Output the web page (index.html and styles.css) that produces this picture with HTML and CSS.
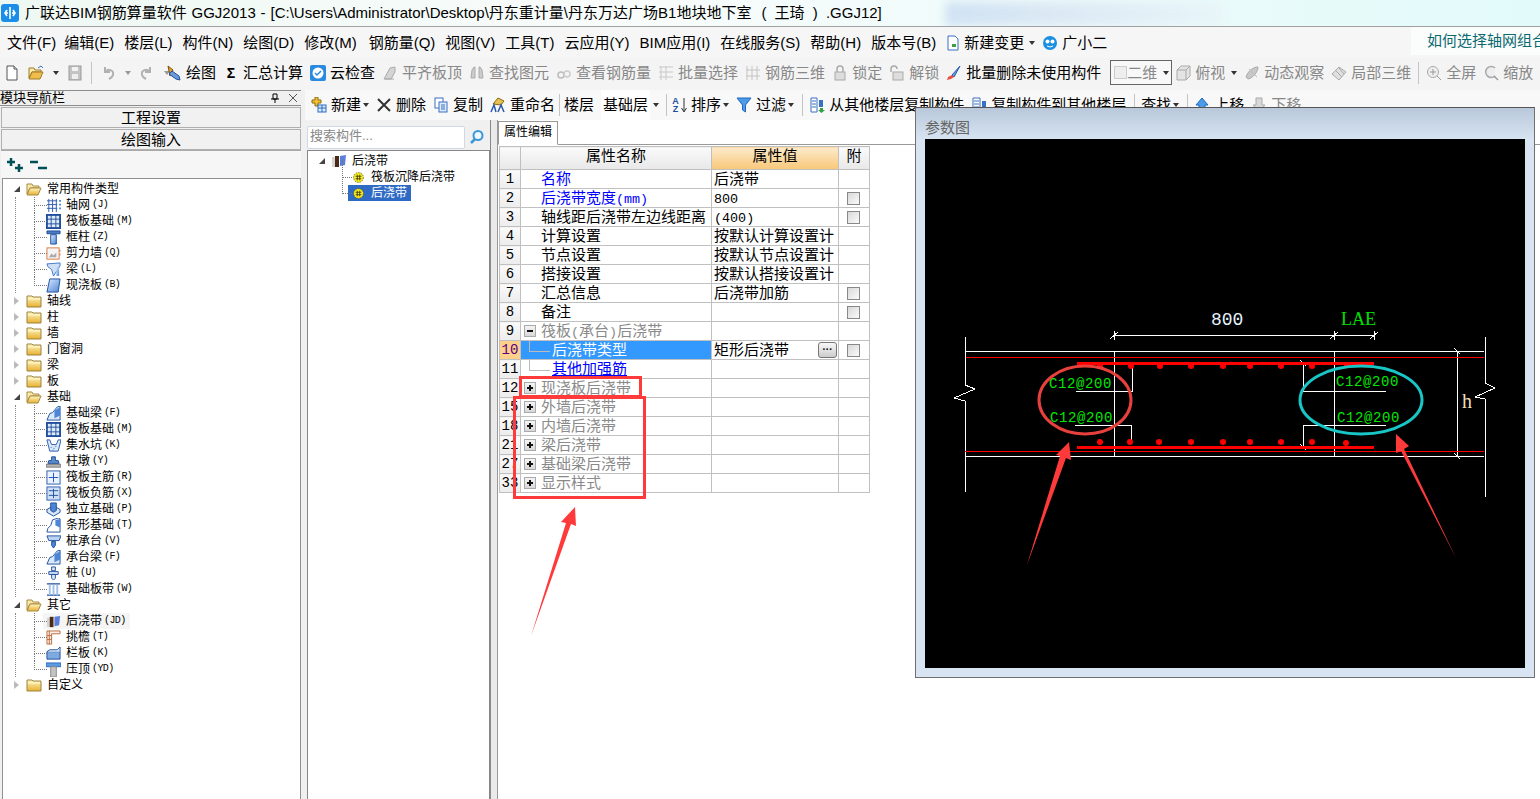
FILE: index.html
```html
<!DOCTYPE html>
<html lang="zh-CN">
<head>
<meta charset="utf-8">
<title>广联达BIM钢筋算量软件 GGJ2013</title>
<link rel="stylesheet" href="styles.css">
</head>
<body>
<svg class="sprite" width="0" height="0" aria-hidden="true">
<defs>
<linearGradient id="gf" x1="0" y1="0" x2="0" y2="1"><stop offset="0" stop-color="#fff6c0"/><stop offset="1" stop-color="#e8b030"/></linearGradient>
<linearGradient id="gb" x1="0" y1="0" x2="1" y2="1"><stop offset="0" stop-color="#dcebff"/><stop offset="1" stop-color="#4d86d8"/></linearGradient>
<symbol id="f-open" viewBox="0 0 16 16"><path d="M1 3h5l1 2h6v2H4L1 13z" fill="#fbe9a8" stroke="#a88b45"/><path d="M1 14l3-7h11l-3 7z" fill="url(#gf)" stroke="#a88b45"/></symbol>
<symbol id="f-closed" viewBox="0 0 16 16"><path d="M1 4V3h5l1 1h8v10H1z" fill="url(#gf)" stroke="#9a8440"/><path d="M2 6h12" stroke="#fff8d8"/></symbol>
<symbol id="i-grid" viewBox="0 0 16 16"><path d="M1 3h11M1 7h11M1 11h11M3 1v14M7 1v14M11 1v14" stroke="#2a5ab0" fill="none"/><path d="M14 2h2v2h-2zM14 6h2v2h-2zM14 10h2v2h-2z" fill="#4c86d4"/></symbol>
<symbol id="i-raft" viewBox="0 0 16 16"><rect x="1" y="1" width="14" height="14" fill="#dfeaf8" stroke="#1f4f9c" stroke-width="2"/><path d="M5.500 1v14M10.500 1v14M1 5.500h14M1 10.500h14" stroke="#1f4f9c"/></symbol>
<symbol id="i-col" viewBox="0 0 16 16"><path d="M1 1h14v3H1z" fill="#4a7cc4" stroke="#1f4f9c"/><path d="M5 5h6v10H5z" fill="url(#gb)" stroke="#1f4f9c"/></symbol>
<symbol id="i-wall" viewBox="0 0 16 16"><rect x="1" y="2" width="13" height="12" fill="#f4f4f4" stroke="#d87a40"/><path d="M3 12l3-4 2 2 3-3v5z" fill="#aaa"/><path d="M15 4v2M15 8v2" stroke="#d87a40"/></symbol>
<symbol id="i-beam" viewBox="0 0 16 16"><path d="M1 2l14-1v3L8 15 6 8 2 5z" fill="#cfe0f6" stroke="#3c78c8"/><path d="M11 4l3 1v10h-3z" fill="url(#gb)"/></symbol>
<symbol id="i-slab" viewBox="0 0 16 16"><path d="M4 1h11l-2 14H1z" fill="url(#gb)" stroke="#1f4f9c"/></symbol>
<symbol id="i-fbeam" viewBox="0 0 16 16"><path d="M1 15l3-7 3-1 5-6 3-1v15H1z" fill="#dbe8f8" stroke="#1f4f9c"/><path d="M9 5l6-4v9l-6 3z" fill="#4d86d8"/></symbol>
<symbol id="i-pit" viewBox="0 0 16 16"><path d="M1 2h3l2 5h5l2-5h3l-3 12H4z" fill="#dce9f8" stroke="#2a5ab0"/><path d="M5 10h1M8 11h1M10 9h1M7 13h1" stroke="#2a5ab0"/></symbol>
<symbol id="i-pier" viewBox="0 0 16 16"><path d="M6 3h4v4h3l1 3H2l1-3h3z" fill="#5b8ccc" stroke="#1f4f9c"/><rect x="0" y="11" width="16" height="3" fill="#b8b8b8" stroke="#777"/></symbol>
<symbol id="i-rb1" viewBox="0 0 16 16"><rect x="1" y="1" width="14" height="14" fill="#eaf2fc" stroke="#2a5ab0"/><path d="M8 3v10M3 8h10" stroke="#1a50c0"/></symbol>
<symbol id="i-rb2" viewBox="0 0 16 16"><rect x="1" y="1" width="14" height="14" fill="#cfe0f6" stroke="#2a5ab0"/><path d="M3 5h10M3 10h10M8 3v10" stroke="#1f4f9c"/></symbol>
<symbol id="i-iso" viewBox="0 0 16 16"><path d="M1 8l7-4 7 4v3l-7 4-7-4z" fill="#dbe8f8" stroke="#1f4f9c"/><path d="M5 1h6v8l-3 2-3-2z" fill="#4d86d8" stroke="#1f4f9c"/></symbol>
<symbol id="i-strip" viewBox="0 0 16 16"><path d="M1 15l1-4 3-3 2-6 6-2 2 1v14z" fill="#fff" stroke="#1f4f9c"/><path d="M10 2l5-1v9l-5-2z" fill="#4d86d8"/></symbol>
<symbol id="i-cap" viewBox="0 0 16 16"><path d="M1 2h15l-2 5H3z" fill="#bcd4f2" stroke="#1f4f9c"/><path d="M6 8h4v4l-2 3-2-3z" fill="#4d86d8" stroke="#1f4f9c"/></symbol>
<symbol id="i-pile" viewBox="0 0 16 16"><path d="M6 1h4v4h-4zM3 6h10v3H3zM6 9h4v4l-2 2-2-2z" fill="#dbe8f8" stroke="#1f4f9c"/></symbol>
<symbol id="i-band" viewBox="0 0 16 16"><path d="M1 2h14M1 14h14" stroke="#1f4f9c" stroke-width="1.500"/><path d="M3 3h2v11H3zM7 3h2v11H7zM11 3h2v11h-2z" fill="#9fc0ea"/></symbol>
<symbol id="i-pour" viewBox="0 0 16 16"><path d="M1 4h6v10H1z" fill="#d8d4d0"/><path d="M4 3h4v11H4z" fill="#4a2a18"/><path d="M9 3l6-1-1 10-5 1z" fill="#5b7fd8"/></symbol>
<symbol id="i-eave" viewBox="0 0 16 16"><path d="M1 1h14v3H6v11H1z" fill="#fbeee4" stroke="#b86a3c"/><path d="M1 6h5M1 10h5M3.500 1v14" stroke="#b86a3c"/></symbol>
<symbol id="i-rail" viewBox="0 0 16 16"><path d="M1 6h14v8H1z" fill="#7eaae0" stroke="#1f4f9c"/><path d="M1 6l3-2h8l3-3v5" fill="#dbe8f8" stroke="#1f4f9c"/></symbol>
<symbol id="i-top" viewBox="0 0 16 16"><path d="M0 1h16v4H0z" fill="#5b9be0" stroke="#2a6ac0"/><path d="M5 5h6v11H5z" fill="#c4c4c4" stroke="#888"/></symbol>
<symbol id="i-gear" viewBox="0 0 16 16"><circle cx="8" cy="8" r="6" fill="#f8f020" stroke="#6a5a10" stroke-dasharray="2 1"/><path d="M4.500 6.500h7M4.500 9.500h7M6.500 4.500v7M9.500 4.500v7" stroke="#3a3410"/></symbol>
<symbol id="t-new" viewBox="0 0 16 16"><path d="M3 1h7l3 3v11H3z" fill="#fff" stroke="#555"/><path d="M10 1v3h3" fill="#ddd" stroke="#555"/></symbol>
<symbol id="t-open" viewBox="0 0 16 16"><path d="M1 3h5l1 2h6v2H4L1 13z" fill="#fbe9a8" stroke="#a07a25"/><path d="M1 14l3-7h11l-3 7z" fill="#f0bc4c" stroke="#a07a25"/><path d="M10 3l3-2 2 2" fill="none" stroke="#3a70c0"/></symbol>
<symbol id="t-save" viewBox="0 0 16 16"><rect x="2" y="1" width="12" height="14" fill="#c4c4c4" stroke="#999"/><rect x="5" y="2" width="6" height="4" fill="#f2f2f2"/><rect x="5" y="9" width="6" height="5" fill="#eee"/></symbol>
<symbol id="t-undo" viewBox="0 0 16 16"><path d="M5 2v5h5M5 7c3-4 9-2 8 3-.5 2-2 3-4 4" fill="none" stroke="#b0b0b0" stroke-width="2"/></symbol>
<symbol id="t-redo" viewBox="0 0 16 16"><path d="M11 2v5H6M11 7c-3-4-9-2-8 3 .5 2 2 3 4 4" fill="none" stroke="#b0b0b0" stroke-width="2"/></symbol>
<symbol id="t-draw" viewBox="0 0 16 16"><path d="M2 1l5 4-3 6z" fill="#e8a030" stroke="#7a5010"/><path d="M6 6l7 5 1 4-4-1-7-5z" fill="#6a9ad8" stroke="#1f4f9c"/></symbol>
<symbol id="t-cloud" viewBox="0 0 16 16"><rect x="0" y="0" width="16" height="16" rx="2" fill="#2a8ae0"/><circle cx="8" cy="8" r="5.500" fill="#fff"/><path d="M5 8l2 2 4-4" fill="none" stroke="#2a8ae0" stroke-width="1.500"/></symbol>
<symbol id="t-gray" viewBox="0 0 16 16"><path d="M2 14L8 3l5-1v5l-4 7z" fill="#d4d4d4" stroke="#aaa"/><path d="M3 14h9" stroke="#aaa"/></symbol>
<symbol id="t-binoc" viewBox="0 0 16 16"><path d="M2 13l1-8 2-3h1v11zM14 13l-1-8-2-3h-1v11z" fill="#ccc" stroke="#aaa"/></symbol>
<symbol id="t-link" viewBox="0 0 16 16"><circle cx="5" cy="10" r="3" fill="none" stroke="#bbb" stroke-width="1.500"/><circle cx="11" cy="9" r="3" fill="none" stroke="#ccc" stroke-width="1.500"/></symbol>
<symbol id="t-sel" viewBox="0 0 16 16"><path d="M1 2h14M1 7h14M1 12h14M3 1v14M8 1v14" stroke="#c8c8c8"/></symbol>
<symbol id="t-3d" viewBox="0 0 16 16"><path d="M2 1v14M7 1v14M12 1v14M1 5h14M1 11h14" stroke="#c4c4c4"/></symbol>
<symbol id="t-lock" viewBox="0 0 16 16"><path d="M5 7V4a3 3 0 016 0v3" fill="none" stroke="#aaa" stroke-width="1.500"/><rect x="3" y="7" width="10" height="8" fill="#ddd" stroke="#aaa"/></symbol>
<symbol id="t-unlock" viewBox="0 0 16 16"><path d="M2 7V4a3 3 0 016 0" fill="none" stroke="#aaa" stroke-width="1.500"/><rect x="4" y="7" width="10" height="8" fill="#ddd" stroke="#aaa"/></symbol>
<symbol id="t-brush" viewBox="0 0 16 16"><path d="M14 1L6 10l2 2z" fill="#6a9ad8" stroke="#2a5ab0"/><path d="M6 10l-4 2-1 3 4-1 3-2z" fill="#e85040"/></symbol>
<symbol id="t-box" viewBox="0 0 16 16"><path d="M2 5l4-4h9v10l-4 4H2z" fill="#e4e4e4" stroke="#aaa"/><path d="M2 5h9v10M11 5l4-4" fill="none" stroke="#aaa"/></symbol>
<symbol id="t-orbit" viewBox="0 0 16 16"><path d="M2 12C4 6 9 2 14 2c0 5-5 11-10 12z" fill="#c8c8c8" stroke="#aaa"/><path d="M5 4l8 8" stroke="#bbb"/></symbol>
<symbol id="t-local" viewBox="0 0 16 16"><path d="M1 9l7-7 7 5-7 8z" fill="#e0e0e0" stroke="#aaa"/><path d="M5 6l6 6M8 3l5 6" stroke="#aaa"/></symbol>
<symbol id="t-full" viewBox="0 0 16 16"><circle cx="7" cy="7" r="5.500" fill="#eee" stroke="#aaa"/><path d="M4 7h6M7 4v6M11 11l4 4" stroke="#999"/></symbol>
<symbol id="t-zoom" viewBox="0 0 16 16"><path d="M12 3a5.500 5.500 0 100 8" fill="#eee" stroke="#aaa" stroke-width="1.500"/><path d="M11 11l4 4" stroke="#999" stroke-width="1.500"/></symbol>
<symbol id="b-new" viewBox="0 0 16 16"><path d="M4 0h3v3h3v3H7v3H4V6H1V3h3z" fill="#f2c030" stroke="#8a6a10"/><rect x="7" y="8" width="8" height="7" fill="#dcecfc" stroke="#2a6ac0"/><path d="M7 11h8M11 8v7" stroke="#2a6ac0"/></symbol>
<symbol id="b-copy" viewBox="0 0 16 16"><rect x="2" y="1" width="8" height="10" fill="#fff" stroke="#3a70c0"/><rect x="6" y="5" width="8" height="10" fill="#dcecfc" stroke="#3a70c0"/><path d="M8 8h4M8 10h4M8 12h4" stroke="#3a70c0"/></symbol>
<symbol id="b-ren" viewBox="0 0 16 16"><path d="M3 7l5-6 6 3-3 4z" fill="#e8c050" stroke="#8a6a10"/><path d="M1 15l3-7 2 7M8 15l3-7 3 7" fill="none" stroke="#2a5ab0" stroke-width="1.500"/></symbol>
<symbol id="b-filter" viewBox="0 0 16 16"><path d="M1 1h14L9.500 8v7l-3-2V8z" fill="#4d9ae8" stroke="#1f6ac0"/></symbol>
<symbol id="b-floor" viewBox="0 0 16 16"><path d="M2 1h6v14H2z" fill="#fff" stroke="#3a70c0"/><path d="M3 4h4M3 7h4M3 10h4" stroke="#3a70c0"/><path d="M10 3h4v7h-4z" fill="#3a70c0"/><path d="M11 11h3v2h2l-3.500 3L9 13h2z" fill="#30a040"/></symbol>
<symbol id="b-floor2" viewBox="0 0 16 16"><path d="M2 1h7v14H2z" fill="#fff" stroke="#3a70c0"/><path d="M3 4h5M3 7h5M3 10h5" stroke="#3a70c0"/><path d="M11 4h4v11h-4z" fill="#3a70c0"/></symbol>
<symbol id="b-up" viewBox="0 0 16 16"><path d="M8 1l6 7h-3v7H5V8H2z" fill="#4d9ae8" stroke="#1f6ac0"/></symbol>
<symbol id="b-down" viewBox="0 0 16 16"><path d="M8 15l6-7h-3V1H5v7H2z" fill="#d8d8d8" stroke="#aaa"/></symbol>
<symbol id="b-search" viewBox="0 0 16 16"><circle cx="9" cy="6.500" r="4.500" fill="#f0f8ff" stroke="#3a98d8" stroke-width="2"/><path d="M6 10l-4 4" stroke="#3a98d8" stroke-width="2.500"/></symbol>
</defs>
</svg>

<header class="titlebar">
<svg class="logo" viewBox="0 0 18 18"><rect width="18" height="18" rx="3" fill="#1a8ee8"/><path d="M9 3v12M4 9h3M11 9h3M6 6l-2 3 2 3M12 6l2 3-2 3" fill="none" stroke="#fff" stroke-width="1.600"/></svg>
<span class="title-text">广联达BIM钢筋算量软件 GGJ2013 - [C:\Users\Administrator\Desktop\丹东重计量\丹东万达广场B1地块地下室<span class="title-tail">( 王琦 ) .GGJ12]</span></span>
<div class="title-blur"></div>
</header>

<nav class="menubar">
<span class="menu">文件(F)</span><span class="menu">编辑(E)</span><span class="menu">楼层(L)</span><span class="menu">构件(N)</span><span class="menu">绘图(D)</span><span class="menu">修改(M)</span><span class="menu">钢筋量(Q)</span><span class="menu">视图(V)</span><span class="menu">工具(T)</span><span class="menu">云应用(Y)</span><span class="menu">BIM应用(I)</span><span class="menu">在线服务(S)</span><span class="menu">帮助(H)</span><span class="menu">版本号(B)</span>
<span class="menu-ico"><svg class="ico" viewBox="0 0 16 16"><path d="M3 1h7l3 3v11H3z" fill="#fff" stroke="#3a70c0"/><path d="M7 9h4v3H7z" fill="#40a040"/></svg>新建变更<i class="caret"></i></span>
<span class="menu-ico"><svg class="ico" viewBox="0 0 16 16"><ellipse cx="8" cy="8" rx="7" ry="7" fill="#1a90e0"/><circle cx="5.500" cy="6.500" r="2" fill="#fff"/><circle cx="10.500" cy="6.500" r="2" fill="#fff"/><path d="M5 11q3 2 6 0" stroke="#fff" fill="none"/></svg>广小二</span>
<div class="menu-tip">如何选择轴网组合</div>
</nav>

<div class="toolbar">
<div class="tgroup">
<span class="ti"><svg class="ico"><use href="#t-new"/></svg></span>
<span class="ti"><svg class="ico"><use href="#t-open"/></svg><i class="caret"></i></span>
<span class="ti"><svg class="ico"><use href="#t-save"/></svg></span>
<i class="sep"></i>
<span class="ti"><svg class="ico"><use href="#t-undo"/></svg><i class="caret dim"></i></span>
<span class="ti"><svg class="ico"><use href="#t-redo"/></svg><i class="caret dim"></i></span>
</div>
<span class="ti"><svg class="ico"><use href="#t-draw"/></svg>绘图</span>
<span class="ti"><b class="sigma">Σ</b>汇总计算</span>
<span class="ti"><svg class="ico"><use href="#t-cloud"/></svg>云检查</span>
<span class="ti off"><svg class="ico"><use href="#t-gray"/></svg>平齐板顶</span>
<span class="ti off"><svg class="ico"><use href="#t-binoc"/></svg>查找图元</span>
<span class="ti off"><svg class="ico"><use href="#t-link"/></svg>查看钢筋量</span>
<span class="ti off"><svg class="ico"><use href="#t-sel"/></svg>批量选择</span>
<span class="ti off"><svg class="ico"><use href="#t-3d"/></svg>钢筋三维</span>
<span class="ti off"><svg class="ico"><use href="#t-lock"/></svg>锁定</span>
<span class="ti off"><svg class="ico"><use href="#t-unlock"/></svg>解锁</span>
<span class="ti"><svg class="ico"><use href="#t-brush"/></svg>批量删除未使用构件</span>
<span class="combo"><i class="combo-box"></i>二维<i class="caret"></i></span>
<span class="ti off"><svg class="ico"><use href="#t-box"/></svg>俯视<i class="caret"></i></span>
<span class="ti off"><svg class="ico"><use href="#t-orbit"/></svg>动态观察</span>
<span class="ti off"><svg class="ico"><use href="#t-local"/></svg>局部三维</span>
<i class="sep"></i>
<span class="ti off"><svg class="ico"><use href="#t-full"/></svg>全屏</span>
<span class="ti off"><svg class="ico"><use href="#t-zoom"/></svg>缩放</span>
</div>

<main class="main">
<aside class="nav">
<div class="nav-head"><span>模块导航栏</span><span class="nav-pins"><svg class="pin" viewBox="0 0 10 10"><path d="M3 1h4v5H3zM1 6h8M5 6v4" fill="none" stroke="#000"/></svg><svg class="pin" viewBox="0 0 10 10"><path d="M1 1l8 8M9 1l-8 8" stroke="#555"/></svg></span></div>
<div class="nav-btn">工程设置</div>
<div class="nav-btn">绘图输入</div>
<div class="nav-tools">
<svg class="big" viewBox="0 0 18 16"><path d="M4 1v8M0 5h8M12 7v8M8 11h8" stroke="#00505a" stroke-width="2.500"/></svg>
<svg class="big" viewBox="0 0 18 16"><path d="M0 5h8M8 11h9" stroke="#00505a" stroke-width="2.500"/></svg>
</div>
<div class="tree">
<div class="node open"><i class="exp"></i><svg class="ico"><use href="#f-open"/></svg><span>常用构件类型</span></div>
<div class="kids">
<div class="leaf"><svg class="ico"><use href="#i-grid"/></svg>轴网<small>(J)</small></div>
<div class="leaf"><svg class="ico"><use href="#i-raft"/></svg>筏板基础<small>(M)</small></div>
<div class="leaf"><svg class="ico"><use href="#i-col"/></svg>框柱<small>(Z)</small></div>
<div class="leaf"><svg class="ico"><use href="#i-wall"/></svg>剪力墙<small>(Q)</small></div>
<div class="leaf"><svg class="ico"><use href="#i-beam"/></svg>梁<small>(L)</small></div>
<div class="leaf"><svg class="ico"><use href="#i-slab"/></svg>现浇板<small>(B)</small></div>
</div>
<div class="node"><i class="exp"></i><svg class="ico"><use href="#f-closed"/></svg><span>轴线</span></div>
<div class="node"><i class="exp"></i><svg class="ico"><use href="#f-closed"/></svg><span>柱</span></div>
<div class="node"><i class="exp"></i><svg class="ico"><use href="#f-closed"/></svg><span>墙</span></div>
<div class="node"><i class="exp"></i><svg class="ico"><use href="#f-closed"/></svg><span>门窗洞</span></div>
<div class="node"><i class="exp"></i><svg class="ico"><use href="#f-closed"/></svg><span>梁</span></div>
<div class="node"><i class="exp"></i><svg class="ico"><use href="#f-closed"/></svg><span>板</span></div>
<div class="node open"><i class="exp"></i><svg class="ico"><use href="#f-open"/></svg><span>基础</span></div>
<div class="kids">
<div class="leaf"><svg class="ico"><use href="#i-fbeam"/></svg>基础梁<small>(F)</small></div>
<div class="leaf"><svg class="ico"><use href="#i-raft"/></svg>筏板基础<small>(M)</small></div>
<div class="leaf"><svg class="ico"><use href="#i-pit"/></svg>集水坑<small>(K)</small></div>
<div class="leaf"><svg class="ico"><use href="#i-pier"/></svg>柱墩<small>(Y)</small></div>
<div class="leaf"><svg class="ico"><use href="#i-rb1"/></svg>筏板主筋<small>(R)</small></div>
<div class="leaf"><svg class="ico"><use href="#i-rb2"/></svg>筏板负筋<small>(X)</small></div>
<div class="leaf"><svg class="ico"><use href="#i-iso"/></svg>独立基础<small>(P)</small></div>
<div class="leaf"><svg class="ico"><use href="#i-strip"/></svg>条形基础<small>(T)</small></div>
<div class="leaf"><svg class="ico"><use href="#i-cap"/></svg>桩承台<small>(V)</small></div>
<div class="leaf"><svg class="ico"><use href="#i-fbeam"/></svg>承台梁<small>(F)</small></div>
<div class="leaf"><svg class="ico"><use href="#i-pile"/></svg>桩<small>(U)</small></div>
<div class="leaf"><svg class="ico"><use href="#i-band"/></svg>基础板带<small>(W)</small></div>
</div>
<div class="node open"><i class="exp"></i><svg class="ico"><use href="#f-open"/></svg><span>其它</span></div>
<div class="kids">
<div class="leaf current"><svg class="ico"><use href="#i-pour"/></svg>后浇带<small>(JD)</small></div>
<div class="leaf"><svg class="ico"><use href="#i-eave"/></svg>挑檐<small>(T)</small></div>
<div class="leaf"><svg class="ico"><use href="#i-rail"/></svg>栏板<small>(K)</small></div>
<div class="leaf"><svg class="ico"><use href="#i-top"/></svg>压顶<small>(YD)</small></div>
</div>
<div class="node"><i class="exp"></i><svg class="ico"><use href="#f-closed"/></svg><span>自定义</span></div>
</div>
</aside>

<section class="work">
<div class="subbar">
<span class="ti"><svg class="ico"><use href="#b-new"/></svg>新建<i class="caret"></i></span>
<span class="ti"><svg class="ico" viewBox="0 0 16 16"><path d="M2 2l12 12M14 2L2 14" stroke="#333" stroke-width="2"/></svg>删除</span>
<span class="ti"><svg class="ico"><use href="#b-copy"/></svg>复制</span>
<span class="ti"><svg class="ico"><use href="#b-ren"/></svg>重命名</span>
<i class="sep"></i>
<span class="ti">楼层</span>
<span class="floor">基础层</span><i class="caret floor-caret"></i>
<i class="sep"></i>
<span class="ti"><span class="az">A<br>Z</span><svg class="arrow" viewBox="0 0 6 16"><path d="M3 1v13M.5 11L3 15l2.500-4" fill="none" stroke="#333"/></svg>排序<i class="caret"></i></span>
<span class="ti"><svg class="ico"><use href="#b-filter"/></svg>过滤<i class="caret"></i></span>
<i class="sep wide"></i>
<span class="ti"><svg class="ico"><use href="#b-floor"/></svg>从其他楼层复制构件</span>
<span class="ti"><svg class="ico"><use href="#b-floor2"/></svg>复制构件到其他楼层</span>
<i class="sep wide"></i>
<span class="ti">查找<i class="caret"></i></span>
<i class="sep wide"></i>
<span class="ti"><svg class="ico"><use href="#b-up"/></svg>上移</span>
<span class="ti off"><svg class="ico"><use href="#b-down"/></svg>下移</span>
</div>
<div class="panes">
<div class="list">
<div class="search"><div class="search-box">搜索构件...</div><svg class="ico"><use href="#b-search"/></svg></div>
<div class="list-tree">
<div class="lnode"><i class="exp open-exp"></i><svg class="ico"><use href="#i-pour"/></svg><span>后浇带</span></div>
<div class="lkids">
<div class="lleaf"><svg class="gear"><use href="#i-gear"/></svg><span>筏板沉降后浇带</span></div>
<div class="lleaf sel"><svg class="gear"><use href="#i-gear"/></svg><span>后浇带</span></div>
</div>
</div>
</div>
<div class="props">
<div class="tabs"><span class="tab">属性编辑</span></div>
<table class="grid">
<colgroup><col class="c-n"><col class="c-name"><col class="c-val"><col class="c-att"></colgroup>
<thead><tr><th></th><th>属性名称</th><th class="hot">属性值</th><th>附</th></tr></thead>
<tbody>
<tr><td class="n">1</td><td class="link">名称</td><td>后浇带</td><td></td></tr>
<tr><td class="n">2</td><td class="link">后浇带宽度<span class="mono">(mm)</span></td><td><span class="mono">800</span></td><td class="cb"><i></i></td></tr>
<tr><td class="n">3</td><td>轴线距后浇带左边线距离</td><td><span class="mono">(400)</span></td><td class="cb"><i></i></td></tr>
<tr><td class="n">4</td><td>计算设置</td><td>按默认计算设置计</td><td></td></tr>
<tr><td class="n">5</td><td>节点设置</td><td>按默认节点设置计</td><td></td></tr>
<tr><td class="n">6</td><td>搭接设置</td><td>按默认搭接设置计</td><td></td></tr>
<tr><td class="n">7</td><td>汇总信息</td><td>后浇带加筋</td><td class="cb"><i></i></td></tr>
<tr><td class="n">8</td><td>备注</td><td></td><td class="cb"><i></i></td></tr>
<tr class="group"><td class="n">9</td><td><i class="pm minus"></i>筏板<span class="mono">(</span>承台<span class="mono">)</span>后浇带</td><td></td><td></td></tr>
<tr class="cur"><td class="n">10</td><td class="sub mid">后浇带类型</td><td class="val-btn">矩形后浇带<i class="dots">···</i></td><td class="cb"><i></i></td></tr>
<tr><td class="n">11</td><td class="sub last"><u>其他加强筋</u></td><td></td><td></td></tr>
<tr class="group"><td class="n">12</td><td><i class="pm"></i>现浇板后浇带</td><td></td><td></td></tr>
<tr class="group"><td class="n">15</td><td><i class="pm"></i>外墙后浇带</td><td></td><td></td></tr>
<tr class="group"><td class="n">18</td><td><i class="pm"></i>内墙后浇带</td><td></td><td></td></tr>
<tr class="group"><td class="n">21</td><td><i class="pm"></i>梁后浇带</td><td></td><td></td></tr>
<tr class="group"><td class="n">27</td><td><i class="pm"></i>基础梁后浇带</td><td></td><td></td></tr>
<tr class="group"><td class="n">33</td><td><i class="pm"></i>显示样式</td><td></td><td></td></tr>
</tbody>
</table>
</div>
</div>
</section>
</main>

<div class="param-win">
<div class="param-title">参数图</div>
<svg class="param-canvas" viewBox="925 139 600 529">
<g class="wl">
<path d="M965 337V385L975 389L954 398L965 401V492"/>
<path d="M1485 337V383L1495 388L1475 397L1485 399V497"/>
<path d="M965 351H1484M965 456H1484M1114 351V456M1334 351V456M1457 351V456"/>
<path d="M1114 335H1374M1114 331V340M1334 331V340M1374 331V340M1110 339L1118 332M1330 339L1338 332M1370 339L1378 332"/>
<path d="M1076 391H1132V366M1075 425H1131V443M1386 391H1303V362M1386 425H1303V447"/>
<path d="M1300 360L1306 366M1300 444L1306 450M1454 348L1460 354M1454 453L1460 459"/>
</g>
<path class="rl" d="M966 357H1484M965 451H1484"/>
<path class="rt" d="M1077 363H1374M1077 447H1374"/>
<g class="dots-r">
<circle cx="1100" cy="366" r="3"/><circle cx="1131" cy="366" r="3"/><circle cx="1160" cy="366" r="3"/><circle cx="1191" cy="366" r="3"/><circle cx="1223" cy="366" r="3"/><circle cx="1250" cy="366" r="3"/><circle cx="1281" cy="366" r="3"/><circle cx="1312" cy="366" r="3"/><circle cx="1347" cy="365" r="3"/>
<circle cx="1100" cy="442" r="3"/><circle cx="1130" cy="442" r="3"/><circle cx="1159" cy="442" r="3"/><circle cx="1191" cy="442" r="3"/><circle cx="1223" cy="442" r="3"/><circle cx="1250" cy="442" r="3"/><circle cx="1281" cy="442" r="3"/><circle cx="1312" cy="442" r="3"/><circle cx="1346" cy="443" r="3"/>
</g>
<text class="cad" x="1049" y="388">C12@200</text>
<text class="cad" x="1050" y="422">C12@200</text>
<text class="cad" x="1336" y="386">C12@200</text>
<text class="cad" x="1337" y="422">C12@200</text>
<text class="dim-t" x="1211" y="325">800</text>
<text class="lae" x="1341" y="325">LAE</text>
<text class="hh" x="1462" y="408">h</text>
<ellipse class="e-red" cx="1085" cy="400" rx="46" ry="34"/>
<ellipse class="e-cyan" cx="1361" cy="400" rx="61" ry="34"/>
</svg>
</div>

<svg class="marks" viewBox="0 0 1540 799">
<rect class="box" x="520.500" y="377.500" width="120" height="19"/>
<rect class="box" x="514.500" y="397.500" width="130" height="100"/>
<path class="arr" d="M531 636L566 523L561 522L575 507L576 526L571 524Z"/>
<path class="arr" d="M1027 565L1060 456L1056 455L1069 442L1071 460L1066 458Z"/>
<path class="arr" d="M1456 558L1401 451L1396 453L1396 434L1409 446L1404 449Z"/>
</svg>
</body>
</html>
```

FILE: styles.css
```css
* { box-sizing: border-box; }
html, body { margin: 0; padding: 0; }
body {
  width: 1540px; height: 799px; overflow: hidden; position: relative;
  background: #f0f0f0; color: #000;
  font: 15px/18px "Liberation Sans", "Noto Sans CJK SC", sans-serif;
  display: flex; flex-direction: column;
}
.sprite { position: absolute; }
i { font-style: normal; }
.ico { width: 16px; height: 16px; flex: none; display: block; }

/* title bar */
.titlebar {
  height: 27px; flex: none; display: flex; align-items: center; gap: 6px; padding-left: 1px;
  position: relative; white-space: nowrap; overflow: hidden;
  background: linear-gradient(90deg, #eef8f3, #f8fcfb 40%, #e2fafa);
  border-bottom: 1px solid #a0a0a0;
}
.logo { width: 18px; height: 18px; flex: none; }
.title-text { font-size: 15px; position: relative; word-spacing: .7px; }
.title-tail { margin-left: 10px; word-spacing: 4px; }
.title-blur {
  position: absolute; left: 945px; top: 2px; width: 280px; height: 24px;
  background: linear-gradient(90deg, #c4d8f0, #dde7f4 60%, #e8f4f8); filter: blur(5px); opacity: .7;
}

/* menu */
.menubar {
  height: 31px; flex: none; display: flex; align-items: center; gap: 10px; padding-left: 7px;
  background: #f6f6f6; white-space: nowrap; position: relative;
}
.menu:first-child { margin-right: -2px; }
.menu:nth-child(6) { margin-right: 2px; }
.menu-ico { display: flex; align-items: center; gap: 3px; margin-left: -1px; }
.menu-ico + .menu-ico { margin-left: -3px; gap: 4px; }
.menu-tip {
  position: absolute; left: 1411px; top: 0; width: 129px; height: 28px; padding: 5px 0 0 16px;
  background: #fbfcfc; color: #0a6a70; overflow: hidden; border-radius: 4px 0 0 0;
}
.caret {
  display: inline-block; flex: none; width: 0; height: 0; margin-left: 2px;
  border: 3px solid transparent; border-top: 4px solid #333; border-bottom: 0;
}
.caret.dim { border-top-color: #999; }

/* toolbar */
.toolbar {
  height: 32px; flex: none; display: flex; align-items: center; gap: 7px; padding: 0 0 3px 4px;
  background: #f4f4f4; white-space: nowrap; overflow: hidden;
}
.tgroup { display: flex; align-items: center; gap: 8px; width: 155px; }
.tgroup .caret { margin-left: 5px; }
.ti { display: inline-flex; align-items: center; gap: 4px; flex: none; }
.ti.off { color: #888; }
.sep { width: 1px; height: 22px; background: #c4c4c4; flex: none; }
.sigma { width: 16px; text-align: center; font-size: 14px; }
.combo {
  flex: none; width: 62px; height: 25px; margin: 0 -4px 0 2px; display: flex; align-items: center;
  border: 1px solid #666; padding-left: 3px; color: #888; background: #f8f8f8;
}
.combo-box { width: 13px; height: 13px; border: 1px solid #ccc; background: #eee; }
.combo .caret { margin-left: 6px; }

/* main */
.main { flex: 1; min-height: 0; display: flex; }
.nav { width: 301px; flex: none; display: flex; flex-direction: column; }
.nav-head {
  height: 16px; flex: none; display: flex; justify-content: space-between; align-items: center;
  font-size: 13px; border: 1px solid #8c8c8c; border-width: 1px 0 1px 0; background: #f0f0f0;
}
.nav-pins { display: flex; gap: 8px; padding-right: 3px; }
.pin { width: 10px; height: 10px; display: block; }
.nav-btn {
  height: 21px; flex: none; margin: 1px 0 0 1px; text-align: center; line-height: 20px;
  background: #f1f1f1; border: 1px solid #b0b0b0;
}
.nav-tools {
  height: 28px; flex: none; display: flex; gap: 5px; align-items: center; padding-left: 6px;
  margin-left: 1px; background: #f6f6f6; border-top: 1px solid #aaa;
}
.big { width: 18px; height: 16px; display: block; }
.tree {
  flex: 1; min-height: 0; margin-left: 2px; border: 1px solid #909090; border-bottom: 0;
  background: #fff; padding-top: 2px; font-size: 12px; line-height: 16px;
}
.node { height: 16px; display: flex; align-items: center; position: relative; padding-left: 23px; }
.node span { margin-left: 5px; }
.exp {
  position: absolute; left: 11px; top: 4px; width: 0; height: 0;
  border-style: solid; border-width: 4px 0 4px 5px; border-color: transparent transparent transparent #bbb;
}
.node.open .exp, .open-exp {
  border-width: 0 0 6px 6px; border-color: transparent transparent #444 transparent; top: 5px;
}
.kids { margin-left: 12px; border-left: 1px dotted #888; padding-left: 18px; }
.leaf { height: 16px; display: flex; align-items: center; position: relative; padding-left: 12px; }
.leaf .ico { margin-right: 5px; width: 15px; height: 15px; }
.leaf::before {
  content: ""; position: absolute; left: 0; top: 0; height: 8px; width: 12px;
  border-left: 1px dotted #777; border-bottom: 1px dotted #777;
}
.leaf:not(:last-child)::after {
  content: ""; position: absolute; left: 0; top: 8px; height: 8px; border-left: 1px dotted #777;
}
.leaf small { font: 10px/16px "Liberation Mono", monospace; letter-spacing: -.6px; margin-left: 2px; }
.leaf.current { background: linear-gradient(90deg, transparent 9px, #f5f5f5 9px, #f5f5f5 96px, transparent 96px); }

.work { flex: 1; min-width: 0; display: flex; flex-direction: column; }
.subbar {
  height: 30px; flex: none; display: flex; align-items: center; gap: 7px; padding-left: 6px;
  margin-left: 4px; background: #f8f8f8; white-space: nowrap; overflow: hidden;
}
.subbar .caret { margin-left: -2px; }
.subbar .sep { margin: 0 -3px; }
.subbar .sep.wide { margin: 0 -1px 0 1px; }
.floor { background: #fff; padding: 0 2px; height: 30px; line-height: 30px; flex: none; }
.subbar .floor-caret { margin: 0 3px 0 -4px; }
.az { font: 9px/8px "Liberation Sans", sans-serif; color: #1f4f9c; flex: none; width: 9px; text-align: center; font-weight: bold; }
.arrow { width: 6px; height: 16px; flex: none; margin-left: -3px; }
.panes { flex: 1; min-height: 0; display: flex; }
.list {
  width: 190px; flex: none; display: flex; flex-direction: column; padding: 5px 0 0 6px;
  background: #f0f0f0; border-right: 1px solid #888;
}
.search { height: 24px; flex: none; display: flex; align-items: center; gap: 4px; }
.search-box {
  width: 158px; height: 23px; padding-left: 2px; font-size: 13px; line-height: 18px; color: #888;
  background: #fff; border: 1px solid #cfd8e6; border-radius: 2px;
}
.list-tree {
  flex: 1; margin-top: 1px; background: #fff; border: 1px solid #888; border-bottom: 0;
  padding-top: 2px; font-size: 12px; line-height: 16px; width: 183px;
}
.lnode { height: 16px; display: flex; align-items: center; padding-left: 23px; position: relative; }
.lnode span { margin-left: 5px; }
.lkids { margin-left: 40px; }
.lleaf { height: 16px; display: flex; align-items: center; position: relative; padding-left: 4px; }
.lleaf::before {
  content: ""; position: absolute; left: -6px; top: -8px; height: 16px; width: 9px;
  border-left: 1px dotted #777; border-bottom: 1px dotted #777;
}
.gear { width: 13px; height: 13px; flex: none; margin-right: 6px; position: relative; }
.lleaf.sel span { color: #fff; }
.lleaf.sel { background: #2f6bc4; width: 63px; }

.props { flex: 1; min-width: 0; background: #fff; padding: 1px 0 0 2px; border-left: 6px solid #eaeaea; position: relative; box-shadow: inset 1px 0 0 #999; }
.tabs { height: 24px; margin-left: -2px; padding-left: 1px; border-bottom: 1px solid #999; }
.tab {
  display: block; height: 24px; width: 60px; text-align: center; font-size: 12px; line-height: 20px;
  background: #fff; border: 1px solid #999; border-bottom-color: #fff;
}
.grid { border-collapse: collapse; table-layout: fixed; width: 370px; margin-top: 1px; }
.c-n { width: 21px; } .c-name { width: 191px; } .c-val { width: 127px; } .c-att { width: 31px; }
.grid tr { height: 19px; }
.grid th, .grid td {
  border: 1px solid #c0c0c0; height: 19px; padding: 0; font-weight: 400; font-size: 15px; line-height: 16px;
  white-space: nowrap; overflow: hidden; vertical-align: middle;
}
.grid thead tr { height: 23px; }
.grid th { height: 23px; padding-bottom: 4px; background: linear-gradient(#fafafa, #e8e8e8); text-align: center; }
.grid th.hot { background: linear-gradient(#fdeacb, #f8c878); }
.grid td { padding-left: 2px; position: relative; }
.grid td:nth-child(2) { padding-left: 20px; }
.grid td.n { padding-left: 0; text-align: center; font: 14px/16px "Liberation Mono", monospace; background: linear-gradient(#fafafa, #ececec); }
.mono { font: 13.400px/12px "Liberation Mono", monospace; }
.link { color: #0000ff; }
.group td { color: #8a8a8a; }
.group td.n { color: #000; }
.cur td:nth-child(2) { background: #3399ff; color: #fff; }
.cur td.n { background: #fdd08c; color: #5a0080; }
.grid td.sub { padding-left: 31px; color: #fff; }
.grid tr:not(.cur) td.sub { color: #0000ff; }
.sub::before {
  content: ""; position: absolute; left: 8px; top: -10px; width: 20px; height: 20px;
  border-left: 1px solid #bbb; border-bottom: 1px solid #bbb;
}
.pm {
  position: absolute; left: 3px; top: 3px; width: 12px; height: 12px; border: 1px solid #aaa;
  background: linear-gradient(#f4f4f4, #d8d8d8);
}
.pm::before { content: ""; position: absolute; left: 2px; top: 4px; width: 6px; height: 2px; background: #111; }
.pm::after { content: ""; position: absolute; left: 4px; top: 2px; width: 2px; height: 6px; background: #111; }
.pm.minus::after { display: none; }
.cb i {
  display: block; width: 13px; height: 13px; margin-left: 8px; border: 1px solid #888;
  background: linear-gradient(135deg, #d8d8d8, #fafafa);
}
.grid td.cb { padding: 0; }
.dots {
  position: absolute; right: 1px; top: 1px; width: 19px; height: 16px; border: 1px solid #777; border-radius: 3px;
  background: linear-gradient(#f8f8f8, #ccc); font: bold 10px/13px "Liberation Sans", sans-serif; text-align: center; color: #000;
}

/* 参数图 window */
.param-win {
  position: absolute; left: 915px; top: 107px; width: 620px; height: 571px;
  padding: 31px 9px 9px; border: 1px solid #707070; border-top-color: #555;
  background: linear-gradient(#b8c8da, #d8e4f2 32px, #d8e4f2);
}
.param-title { position: absolute; left: 9px; top: 11px; color: #666; font-size: 15px; line-height: 18px; }
.param-canvas { display: block; width: 600px; height: 529px; background: #000; }
.wl path { fill: none; stroke: #fff; stroke-width: 1; shape-rendering: crispEdges; }
.rl { fill: none; stroke: #f00; stroke-width: 1; shape-rendering: crispEdges; }
.rt { fill: none; stroke: #f00; stroke-width: 3; shape-rendering: crispEdges; }
.dots-r circle { fill: #f00; }
.cad { fill: #00e800; font: 14px "Liberation Mono", monospace; letter-spacing: .6px; }
.dim-t { fill: #e4f2ff; font: 18px "Liberation Mono", monospace; }
.lae { fill: #00e000; font: 18px "Liberation Serif", serif; }
.hh { fill: #f3dcb8; font: 20px "Liberation Serif", serif; }
.e-red { fill: none; stroke: #e8403c; stroke-width: 3; }
.e-cyan { fill: none; stroke: #19c6c6; stroke-width: 3; }

/* annotation layer */
.marks { position: absolute; left: 0; top: 0; width: 1540px; height: 799px; pointer-events: none; }
.box { fill: none; stroke: #ff3a3a; stroke-width: 3; }
.arr { fill: #ff3a3a; }
```
